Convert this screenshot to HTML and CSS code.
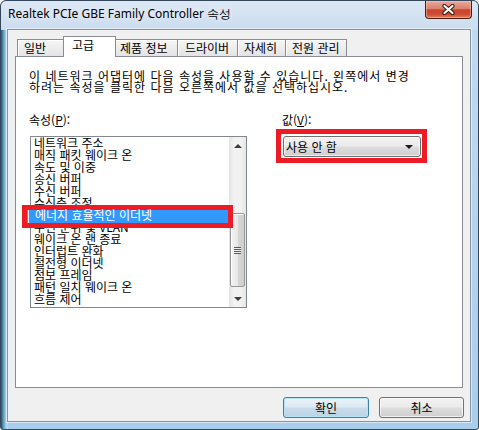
FILE: index.html
```html
<!DOCTYPE html>
<html lang="ko">
<head>
    <meta charset="UTF-8">
    <meta name="viewport" content="width=device-width, initial-scale=1.0">
    <title>Realtek PCIe GBE Family Controller 속성</title>
    <link rel="stylesheet" href="styles.css">
</head>
<body>
    <div class="window">
        <div class="titlebar">
            <span class="title">Realtek PCIe GBE Family Controller 속성</span>
            <button class="close" aria-label="닫기">
                <svg width="15" height="11" viewBox="0 0 15 11">
                    <path d="M3.5 2 L11.5 9 M11.5 2 L3.5 9" stroke="#3b1810" stroke-width="4.2" stroke-linecap="round"/>
                    <path d="M3.5 2 L11.5 9 M11.5 2 L3.5 9" stroke="#fff" stroke-width="2.2" stroke-linecap="round"/>
                </svg>
            </button>
        </div>

        <div class="client">
            <div class="tabs">
                <div class="tab tab-general">일반</div>
                <div class="tab tab-advanced selected">고급</div>
                <div class="tab tab-info">제품 정보</div>
                <div class="tab tab-driver">드라이버</div>
                <div class="tab tab-details">자세히</div>
                <div class="tab tab-power">전원 관리</div>
            </div>

            <div class="panel">
                <p class="intro">이 네트워크 어댑터에 다음 속성을 사용할 수 있습니다. 왼쪽에서 변경<br>하려는 속성을 클릭한 다음 오른쪽에서 값을 선택하십시오.</p>

                <div class="props">
                    <div class="prop-list">
                        <div class="label">속성(<u>P</u>):</div>
                        <div class="listbox">
                            <ul class="items">
                                <li>네트워크 주소</li>
                                <li>매직 패킷 웨이크 온</li>
                                <li>속도 및 이중</li>
                                <li>송신 버퍼</li>
                                <li>수신 버퍼</li>
                                <li>수신측 조정</li>
                                <li class="selected">에너지 효율적인 이더넷</li>
                                <li>우선 순위 및 VLAN</li>
                                <li>웨이크 온 랜 종료</li>
                                <li>인터럽트 완화</li>
                                <li>절전형 이더넷</li>
                                <li>점보 프레임</li>
                                <li>패턴 일치 웨이크 온</li>
                                <li>흐름 제어</li>
                            </ul>
                            <div class="scrollbar">
                                <div class="sb-btn"><span class="arrow-up"></span></div>
                                <div class="sb-track">
                                    <div class="sb-thumb"><span class="grip"></span></div>
                                </div>
                                <div class="sb-btn"><span class="arrow-down"></span></div>
                            </div>
                        </div>
                    </div>

                    <div class="prop-value">
                        <div class="label">값(<u>V</u>):</div>
                        <div class="mark">
                            <div class="combo">
                                <span>사용 안 함</span>
                                <span class="combo-arrow"></span>
                            </div>
                        </div>
                    </div>
                </div>
            </div>

            <div class="buttons">
                <button class="btn btn-default">확인</button>
                <button class="btn btn-cancel">취소</button>
            </div>
        </div>
    </div>
</body>
</html>
```

FILE: styles.css
```css
*,
*::before,
*::after {
    margin: 0;
    padding: 0;
    box-sizing: border-box;
}

body {
    width: 479px;
    height: 430px;
    overflow: hidden;
    background: #fff;
    color: #000;
    font-family: "Noto Sans CJK KR", sans-serif;
    font-size: 12px;
}

/* window frame */
.window {
    width: 479px;
    height: 430px;
    border: 1px solid #34475a;
    border-radius: 6px 6px 3px 3px;
    padding: 0 7px 7px 6px;
    background:
        linear-gradient(#dde8f5, #cadcef) top / 100% 29px no-repeat,
        linear-gradient(to right, #23536a, #4f8fb3 2px, #8bbfe1 4px, #bcd7ef 6px) left top / 7px 100% no-repeat,
        linear-gradient(#c3daf0, #a9cdec);
}

.titlebar {
    height: 28px;
    display: flex;
    justify-content: space-between;
    align-items: flex-start;
}

.title {
    margin: 5px 0 0 1px;
    font-family: "Noto Sans", sans-serif;
    font-size: 12px;
    line-height: 16px;
    color: #000;
    text-shadow: 0 0 6px rgba(255, 255, 255, 0.9);
}

.close {
    width: 47px;
    height: 18px;
    margin-right: -1px;
    border: 1px solid #4a1c14;
    border-top: none;
    border-radius: 0 0 4px 4px;
    background: linear-gradient(#e8ab9d, #dc806c 45%, #c8452c 52%, #cc4c33 78%, #e2815f);
    box-shadow: inset 0 0 0 1px rgba(255, 210, 190, 0.45);
    display: flex;
    justify-content: center;
    align-items: center;
}

/* dialog client area */
.client {
    height: 393px;
    border: 1px solid #8693a3;
    background: #f0f0f0;
    padding-top: 6px;
    box-shadow: 0 0 0 1px rgba(255, 255, 255, 0.5);
}

.tabs {
    height: 20px;
    padding-left: 9px;
    display: flex;
    align-items: flex-end;
}

.tab {
    height: 17px;
    margin-left: -1px;
    padding-left: 6px;
    border: 1px solid #898c95;
    border-bottom: none;
    background: linear-gradient(#f6f6f6, #e4e4e4);
    box-shadow: inset 1px 1px 0 #fff;
    line-height: 16px;
    white-space: nowrap;
}

.tab-general { width: 48px; margin-left: 0; }
.tab-advanced { width: 53px; margin-left: -2px; }
.tab-info { width: 64px; margin-left: -2px; padding-left: 5px; }
.tab-driver { width: 61px; padding-left: 7px; }
.tab-details { width: 49px; }
.tab-power { width: 62px; }

.tab.selected {
    position: relative;
    z-index: 1;
    height: 21px;
    margin-bottom: -1px;
    padding-top: 1px;
    padding-left: 8px;
    background: #fff;
    box-shadow: none;
    line-height: 14px;
}

.panel {
    width: 448px;
    height: 332px;
    margin-left: 7px;
    padding: 13px 0 0 13px;
    border: 1px solid #898c95;
    background: #fff;
}

.intro {
    line-height: 11px;
    letter-spacing: 1px;
    white-space: nowrap;
}

.props {
    margin-top: 22px;
    display: flex;
    gap: 29px;
}

.label {
    line-height: 12px;
}

/* property list */
.listbox {
    width: 217px;
    height: 172px;
    margin: 10px 0 0 1px;
    border: 1px solid #828790;
    display: flex;
}

.items {
    flex: 1;
    list-style: none;
}

.items li {
    height: 12px;
    padding-left: 3px;
    line-height: 12px;
    white-space: nowrap;
}

.items li.selected {
    position: relative;
    z-index: 1;
    padding-left: 4px;
    color: #fff;
}

/* red annotation box round the chosen item */
.items li.selected::before {
    content: "";
    position: absolute;
    z-index: -1;
    left: -9px;
    top: -4px;
    width: 211px;
    height: 23px;
    border: 5px solid #ed1c24;
    background: linear-gradient(to right, #3399ff 1px, #e8f2ff 1px 2px, #3399ff 2px);
}

.scrollbar {
    width: 17px;
    display: flex;
    flex-direction: column;
    background: linear-gradient(to right, #e3e3e3, #f2f2f2 30%, #f2f2f2 70%, #e6e6e6);
}

.sb-btn {
    height: 17px;
    display: flex;
    justify-content: center;
    align-items: center;
}

.arrow-up,
.arrow-down {
    width: 0;
    height: 0;
    border-left: 4px solid transparent;
    border-right: 4px solid transparent;
}

.arrow-up {
    border-bottom: 4px solid #3c3c3c;
}

.arrow-down {
    border-top: 4px solid #3c3c3c;
}

.sb-track {
    flex: 1;
    padding: 59px 1px 0 1px;
}

.sb-thumb {
    height: 74px;
    border: 1px solid #979797;
    border-radius: 2px;
    background: linear-gradient(to right, #f4f4f4, #e8e8e8 50%, #d6d6d6 51%, #cfcfcf);
    box-shadow: inset 1px 1px 0 #fff;
    display: flex;
    justify-content: center;
    align-items: center;
}

.grip {
    width: 7px;
    height: 7px;
    background: repeating-linear-gradient(#5a5a5a 0 1px, #f0f0f0 1px 2px);
}

/* value combo */
.prop-value .label {
    margin-left: 6px;
}

.mark {
    width: 151px;
    height: 34px;
    margin-top: 3px;
    padding: 2px 1px 1px 2px;
    border: 5px solid #ed1c24;
}

.combo {
    height: 21px;
    padding: 0 7px 0 2px;
    border: 1px solid #707070;
    border-radius: 3px;
    background: linear-gradient(#f2f2f2, #ebebeb 48%, #dddddd 52%, #cfcfcf);
    box-shadow: inset 0 0 0 1px rgba(255, 255, 255, 0.6);
    display: flex;
    justify-content: space-between;
    align-items: center;
    line-height: 12px;
}

.combo-arrow {
    width: 0;
    height: 0;
    border-left: 4px solid transparent;
    border-right: 4px solid transparent;
    border-top: 4px solid #1a1a1a;
}

/* dialog buttons */
.buttons {
    margin-top: 9px;
    padding-right: 6px;
    display: flex;
    justify-content: flex-end;
    gap: 10px;
}

.btn {
    width: 85px;
    height: 21px;
    border: 1px solid #707070;
    border-radius: 3px;
    background: linear-gradient(#f2f2f2, #ebebeb 48%, #dddddd 52%, #cfcfcf);
    box-shadow: inset 0 0 0 1px rgba(255, 255, 255, 0.7);
    font-family: "Noto Sans CJK KR", sans-serif;
    font-size: 12px;
    line-height: 12px;
    color: #000;
}

.btn-default {
    width: 86px;
    border-color: #3c7fb1;
    background: linear-gradient(#eaf3f9, #dce9f3 48%, #c9dcea 52%, #bcd3e5);
    box-shadow: inset 0 0 0 1px #b7e3f9;
}
```
